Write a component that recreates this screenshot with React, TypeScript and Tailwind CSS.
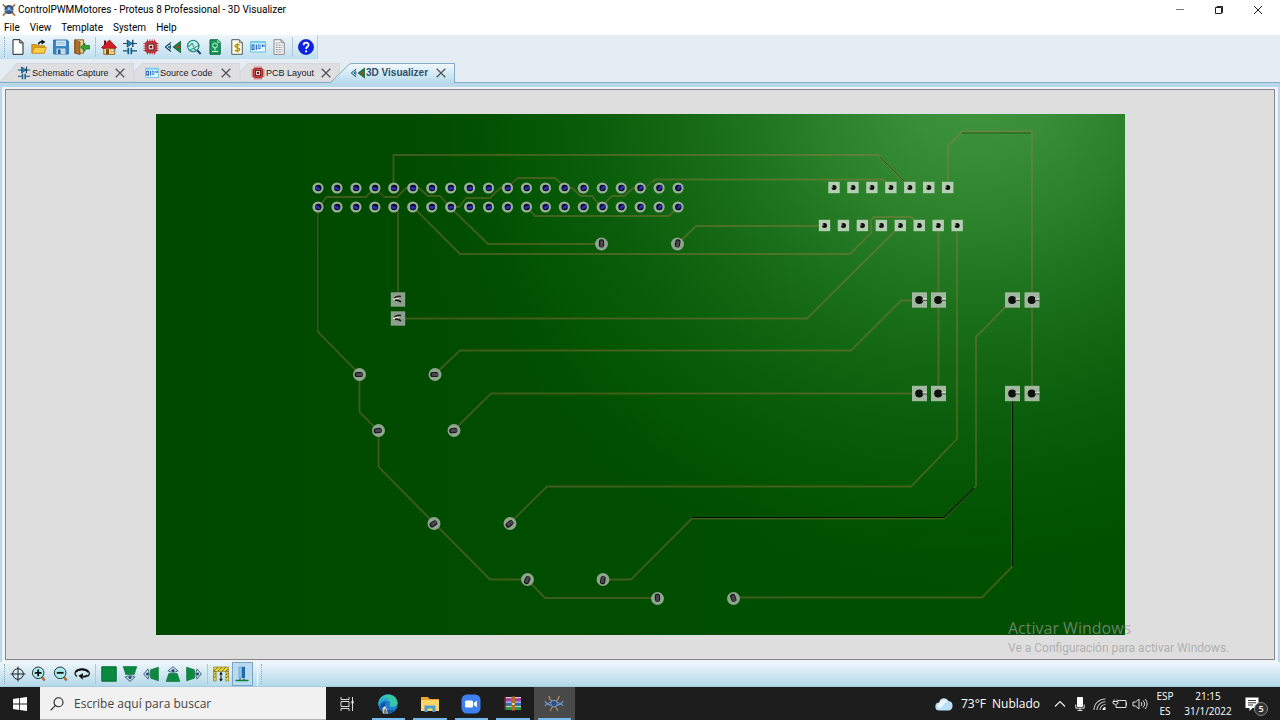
import React from "react";

type IconProps = { children: React.ReactNode; size?: string; box?: string };

function Svg({ children, size = "h-4 w-4", box = "0 0 16 16" }: IconProps) {
  return (
    <svg viewBox={box} className={`${size} shrink-0`} fill="none" aria-hidden="true">
      {children}
    </svg>
  );
}

/* ---------- application icons ---------- */

const NewIcon = () => (
  <Svg>
    <path d="M3 .7h7l3 3v11.6H3z" fill="#fff" stroke="#222" />
    <path d="M9.8.7v3.2H13" stroke="#222" />
  </Svg>
);

const OpenIcon = () => (
  <Svg>
    <path d="M.8 14V5.5h4.5l1.2 1.3h7V14z" fill="#e2a21a" stroke="#a8740c" strokeWidth=".7" />
    <path d="M1 14.2 3.6 8.4h12L13.2 14.2z" fill="#ffce45" stroke="#b98412" strokeWidth=".7" />
    <path d="M7.5 5.5c.2-2 1.5-3 3.8-2.7" stroke="#111" strokeWidth="1.5" />
    <path d="M10.5.4 14.5 3l-4 2.4z" fill="#111" />
  </Svg>
);

const SaveIcon = () => (
  <Svg>
    <path d="M.6 1h13.6l1.2 1.2V15H.6z" fill="#3b86c6" stroke="#1f5f9c" strokeWidth=".8" />
    <path d="M3 1.5h10V7H3z" fill="#d9ecf8" />
    <path d="M3.5 3.5h9M3.5 5.2h9" stroke="#7db2da" strokeWidth=".7" />
    <path d="M3.5 9.5h9V15h-9z" fill="#c4d8e6" />
    <path d="M5 10.5h2.5V15H5z" fill="#245f92" />
  </Svg>
);

const ExitIcon = () => (
  <Svg>
    <path d="M.6.8h9v13.4h-9z" fill="#e9c98c" stroke="#8a5a1e" strokeWidth=".9" />
    <path d="M1 .9 6 3v12.8L1 14z" fill="#a9712d" stroke="#6b4212" strokeWidth=".6" />
    <path d="m6.5 8.2 4.5-4v2.3h4.6v3.6H11v2.3z" fill="#35a336" stroke="#14701a" strokeWidth=".7" />
  </Svg>
);

const HomeIcon = () => (
  <Svg>
    <path d="M2.8 8h11v7.3h-11z" fill="#f7e08a" stroke="#77490e" strokeWidth=".8" />
    <path d="M3 1.5h2.2V6H3z" fill="#7d1414" />
    <path d="M.5 8.5 8.5 1l7 7.5-1 .8H1.3z" fill="#cf1f24" stroke="#7b0c10" strokeWidth=".7" />
    <path d="M5 10.2h3v5H5z" fill="#81480d" />
    <path d="M9.8 10h2.6v2.6H9.8z" fill="#fff" stroke="#9b6b20" strokeWidth=".6" />
  </Svg>
);

const SchematicIcon = () => (
  <Svg>
    <path d="M1 4.5h14M1 11.8h5M9.6 11.8H15" stroke="#174f70" strokeWidth="1.2" />
    <path d="m5.2 1 5 3.5-5 3.5z" fill="#2383b8" stroke="#123d58" strokeWidth=".8" />
    <path d="M10.8.8v7.2" stroke="#123d58" strokeWidth="1.3" />
    <path d="M6.3 8.8v6.4M9.3 8.8v6.4" stroke="#14608c" strokeWidth="1.7" />
  </Svg>
);

const ChipIcon = () => (
  <Svg>
    <path
      d="M4.5.5v15M6.9.5v15M9.2.5v15M11.5.5v15M.5 4.5h15M.5 6.9h15M.5 9.2h15M.5 11.5h15"
      stroke="#c8383c"
      strokeWidth="1"
    />
    <rect x="2.8" y="2.8" width="10.4" height="10.4" rx="1.2" fill="#d8484b" stroke="#a0181d" />
    <rect x="5" y="5" width="6" height="6" fill="#f3d6d6" stroke="#46191b" strokeWidth="1" />
    <path d="M6.8 6.8h2.4v2.4H6.8z" fill="#711" />
  </Svg>
);

const VisualizerIcon = () => (
  <Svg>
    <path d="M15.6 2.2v11.6L8 8z" fill="#14813f" stroke="#0b4a25" strokeWidth=".7" />
    <path d="m11 8 3-1.6v3.2z" fill="#d8322c" />
    <path d="M.3 8 6 3.4M.3 8 6 12.6" stroke="#1b3f55" strokeWidth="1.1" />
    <path d="M4.6 5c1.4 1.5 1.4 4.5 0 6" stroke="#1b3f55" />
    <circle cx="4" cy="8" r="1.3" fill="#2d83b0" />
  </Svg>
);

const GerberIcon = () => (
  <Svg>
    <circle cx="7.2" cy="7" r="5.7" fill="#c3ece6" stroke="#2f8f83" strokeWidth="1.2" />
    <path d="M1 7h3l2-3 2.5 5.5L11 7h2.500M4 11l3-1.5L10 11" stroke="#219080" />
    <path d="m11.2 11.2 3.5 3.8" stroke="#1d4e78" strokeWidth="2" />
  </Svg>
);

const DesignIcon = () => (
  <Svg>
    <path d="M3 .8h8L13.2 3v12.2H3z" fill="#1a9a5c" stroke="#0a6038" />
    <circle cx="8" cy="6.500" r="2.400" stroke="#baf0d2" />
    <path d="M8 9v2.500M5 12.5h6.200" stroke="#baf0d2" />
    <path d="M10.8 1v2.300h2.200" stroke="#d9f8e6" strokeWidth=".8" />
  </Svg>
);

const BomIcon = () => (
  <Svg>
    <path d="M2.8.7h7.5l3 3v11.6H2.8z" fill="#fffef0" stroke="#555" />
    <path d="M10.3.7v3h3" stroke="#555" strokeWidth=".8" />
    <path
      d="M10.6 6.3C9.8 5.4 6 5 6 7.1c0 2 4.7 1.2 4.7 3.4 0 2.1-3.9 1.9-5 .7M8.3 4.2v9"
      stroke="#b79300"
      strokeWidth="1.4"
    />
  </Svg>
);

const CodeIcon = () => (
  <Svg>
    <path d="M.5 2.500h15v10.500H.5z" fill="#e2f8ff" stroke="#58bbe0" strokeWidth=".9" />
    <path d="M.5 2.500h15v1.800H.5z" fill="#7ad0ee" />
    <rect x="2" y="6" width="2" height="4.500" stroke="#1553b5" />
    <path d="M6.300 5.500V11M12.500 5.500V8M14 5.500V8" stroke="#1553b5" strokeWidth="1" />
    <rect x="8.200" y="6" width="2" height="3.500" stroke="#2b78cd" strokeWidth=".9" />
  </Svg>
);

const NotesIcon = () => (
  <Svg>
    <path d="M3 .7h7l3.3 3v11.6H3z" fill="#f7f7f7" stroke="#888" />
    <path d="M10 .7v3h3.3" stroke="#777" strokeWidth=".8" />
    <path d="M4.800 4h4M4.800 6.200h6.600M4.800 8.400h6.600M4.800 10.600h6.600M4.800 12.800h6.600" stroke="#8c8c8c" strokeDasharray="2 .8" />
  </Svg>
);

const HelpIcon = () => (
  <Svg>
    <circle cx="8" cy="8" r="7.6" fill="#0b22e8" stroke="#0413a0" strokeWidth=".6" />
    <path d="M5.6 6.200c0-3.400 5-3.200 5-.3 0 1.900-2.500 1.900-2.500 4" stroke="#fff" strokeWidth="1.800" />
    <circle cx="8.100" cy="12.300" r="1.150" fill="#fff" />
  </Svg>
);

const AppIcon = () => (
  <Svg size="h-3.5 w-3.5">
    <path d="m1 1.5 4 4M15 1.5l-4 4M1 14.5l4-4M15 14.5l-4-4" stroke="#a2724b" strokeWidth="2" />
    <circle cx="8" cy="7.5" r="4.6" fill="#355d91" stroke="#263c5c" />
    <path d="M2 10c2.5-3 9.5-3 12 0" stroke="#8fb4d8" />
    <circle cx="8" cy="6.5" r="1.6" fill="#9fc3e6" />
  </Svg>
);

/* ---------- view toolbar icons ---------- */

const TargetIcon = () => (
  <Svg>
    <circle cx="8" cy="8" r="5.3" stroke="#222" />
    <path d="M8 .5v15M.5 8h15" stroke="#222" />
  </Svg>
);

const Zoom = ({ plus }: { plus?: boolean }) => (
  <Svg>
    <path d="m10.800 10.800 2.800 3.800" stroke="#a8672a" strokeWidth="2.400" />
    <circle cx="7.200" cy="6.800" r="5.800" fill="#a8ecf0" stroke="#333" strokeWidth="1" />
    <path d={plus ? "M3.800 6.800h6.800M7.200 3.400v6.800" : "M3.800 6.800h6.800"} stroke="#111" strokeWidth="1.800" />
  </Svg>
);

const SpinIcon = () => (
  <Svg>
    <path d="M3 10.500C-1.500 7 2.500 3 8 3s10 4 5.500 7.500" stroke="#111" strokeWidth="1.300" />
    <path d="M1.800 6c2.500-3.300 10-3.300 12.600.3" stroke="#111" strokeWidth="1.800" />
    <path d="M9 10.800c1.500 0 3.300-.4 4.600-1.500" stroke="#111" strokeWidth="2" />
    <path d="m4.500 9.800 4.500-2.600-.3 6.600z" fill="#111" />
  </Svg>
);

const TopViewIcon = () => (
  <Svg>
    <path d="M.8.8h14.4v14.4H.8z" fill="#0a8a41" stroke="#066630" />
  </Svg>
);

const SideViewIcon = ({ turn }: { turn: number }) => (
  <Svg>
    <g transform={`rotate(${turn} 8 8)`}>
      <path d="M1.200.6h13.600l-2.600 7.900H3.800z" fill="#0a8a41" stroke="#066630" strokeWidth=".6" />
      <path d="M3.500 11c2.500-1.500 6.500-1.500 9 0M2.800 10.800 8 15.300l5.200-4.500" stroke="#23486a" strokeWidth=".9" />
      <circle cx="8" cy="11.600" r="1.500" fill="#23486a" />
    </g>
  </Svg>
);

const HeightIcon = () => (
  <Svg>
    <path d="M.5 1h15v4.500H.5zM.5 5.500h2.700V15H.5zM12.800 5.500h2.700V15h-2.700z" fill="#ead83a" stroke="#77701b" strokeWidth=".6" />
    <path d="m1 5 4-4M5 5l4-4M9 5l4-4M13 5l2-2M.8 9 3 7M.8 12 3 10M13 9l2.200-2M13 12l2.200-2" stroke="#444" strokeWidth=".7" />
    <path d="M8 6.500V15" stroke="#111" />
    <path d="m8 5.800 1.800 2.700H6.200zM8 15.500l1.800-2.700H6.200z" fill="#111" />
  </Svg>
);

const ComponentsIcon = () => (
  <Svg>
    <path d="M5 1h2.800v11H5z" fill="#8ccbee" stroke="#3d84b8" strokeWidth=".5" />
    <path d="M8 .8h3V12H8z" fill="#216ca8" />
    <path d="M6 12.500V14M10 12.500V14" stroke="#333" />
    <path d="M1.500 14.500h13" stroke="#09803b" strokeWidth="1.500" />
  </Svg>
);

/* ---------- circuit board ---------- */

const TRACES = [
  "M393.500 188V155H878L909 187",
  "M318 207 327 197H366L375 188 384 197H397L406 188H419L428 196H440L450 207",
  "M451 207H459L466 198H490L500 188H507L518 178H555L566 188H572L581 196H592L601 207 612 196H624L633 188H646L655 179.500H883L891 187",
  "M527 207 535 216H669L678 207",
  "M413 207 460 254H850L871 233V220L874 217H911L919 225",
  "M450 207 488 244H601",
  "M677.500 244 696 226H824",
  "M393.500 207 398 212V300",
  "M398 318.500H807L900 226",
  "M318 207V332L359.500 374V412L378.500 431V467L434 523 490 579.500H527L545 598H657",
  "M435 374 460 350.500H851L901 300.500H919",
  "M454 430 491 393.500H919",
  "M510 523 547 486.500H911L957 439V226",
  "M603 579.500H631L692 518.500H944L976 486V337L1012 300",
  "M733 597.500H982L1012 567V393",
  "M938.500 226V393",
  "M948 187V146L962 131.500H1032V393",
];

const STRONG_SHADOWS = ["M692 517.500H944L974 488", "M1012.500 400V566"];
const SOFT_SHADOWS = [
  "M318.800 214V330",
  "M962 133H1031",
  "M880 157 907 184",
  "M378 191 384 197",
  "M510 187 517 180",
  "M647 188 653 182",
];

const ROUND_PADS = [
  { x: 601.5, y: 244, turn: 90 },
  { x: 677.5, y: 244, turn: 100 },
  { x: 359.5, y: 374.5, turn: 0 },
  { x: 435, y: 374.5, turn: 0 },
  { x: 378.5, y: 430.5, turn: -6 },
  { x: 454, y: 430.5, turn: -6 },
  { x: 434, y: 523.5, turn: -35 },
  { x: 510, y: 523.5, turn: -40 },
  { x: 527.5, y: 579.5, turn: -65 },
  { x: 603, y: 579.5, turn: -80 },
  { x: 657.5, y: 598.5, turn: 88 },
  { x: 733.5, y: 598.5, turn: 68 },
];

const PITCH = 18.95;
const series = (count: number, start: number) => Array.from({ length: count }, (_, i) => start + i * PITCH);

function Board() {
  return (
    <svg viewBox="156 114 969 521" className="h-full w-full" role="img" aria-label="PCB">
      <defs>
        <linearGradient id="base" x1="0" y1="0" x2="1" y2="0">
          <stop offset="0" stopColor="#004900" />
          <stop offset=".7" stopColor="#004f00" />
          <stop offset="1" stopColor="#005000" />
        </linearGradient>
        <radialGradient
          id="glow"
          gradientUnits="userSpaceOnUse"
          cx="0"
          cy="0"
          r="1"
          gradientTransform="translate(980 90) rotate(-12) scale(580 500)"
        >
          <stop offset="0" stopColor="#3f963d" />
          <stop offset=".12" stopColor="#388f37" />
          <stop offset=".28" stopColor="#2a812a" />
          <stop offset=".44" stopColor="#1b701b" />
          <stop offset=".64" stopColor="#0c5f0c" />
          <stop offset=".8" stopColor="#055705" stopOpacity=".85" />
          <stop offset="1" stopColor="#005000" stopOpacity="0" />
        </radialGradient>
      </defs>
      <rect x="156" y="114" width="969" height="521" fill="url(#base)" />
      <rect x="156" y="114" width="969" height="521" fill="url(#glow)" />

      <g fill="none" stroke="#b07a48" strokeOpacity=".36" strokeWidth="1.8">
        {TRACES.map((d) => (
          <path key={d} d={d} />
        ))}
      </g>
      <g fill="none" stroke="#001000" strokeOpacity=".95" strokeWidth="1.1">
        {STRONG_SHADOWS.map((d) => (
          <path key={d} d={d} />
        ))}
      </g>
      <g fill="none" stroke="#001c00" strokeOpacity=".45">
        {SOFT_SHADOWS.map((d) => (
          <path key={d} d={d} />
        ))}
      </g>

      {[188, 207].map((y) =>
        series(20, 318).map((x, i) => (
          <g key={`${x}-${y}`}>
            <circle cx={x} cy={y} r="5.6" fill="#98b098" />
            <circle cx={x + 0.3} cy={y} r="3.2" fill="#0b0b22" />
            <ellipse
              cx={x + i * 0.05}
              cy={y + 0.5}
              rx="2.9"
              ry="1.4"
              fill="#2c2cb8"
              transform={`rotate(${24 - i * 4} ${x} ${y})`}
            />
          </g>
        )),
      )}

      {[...series(7, 834).map((x) => [x, 187.5]), ...series(8, 824.5).map((x) => [x, 225.5])].map(([x, y]) => (
        <g key={`${x}-${y}`}>
          <rect x={x - 5.7} y={y - 5.7} width="11.4" height="11.4" fill="#b4ceb2" />
          <circle cx={x} cy={y} r="2.5" fill="#0a0a0a" />
          <path d={`M${x - 3} ${y - 0.5}h2`} stroke="#d9e8d7" strokeWidth="1" />
        </g>
      ))}

      {[300, 393.5].map((y) =>
        [919.5, 938.5, 1012.5, 1032].map((x) => (
          <g key={`${x}-${y}`}>
            <rect x={x - 7.5} y={y - 7.7} width="15" height="15.4" fill="#a3b8a1" />
            <circle cx={x - 0.3} cy={y} r="4" fill="#0d100d" />
            <path d={`M${x + 3} ${y - 1}h4.5`} stroke="#c3d4c2" strokeWidth="1.5" />
            <path d={`M${x + 2.5} ${y + 0.5}h5`} stroke="#4c5a4c" strokeWidth="1" />
          </g>
        )),
      )}

      {[299.5, 318.5].map((y) => (
        <g key={y}>
          <rect x="390.8" y={y - 7.2} width="14.4" height="14.4" fill="#8da08d" />
          <path d={`M394 ${y - 1}q3-3 7-2`} stroke="#1d1d1d" strokeWidth="1.4" fill="none" />
          <path d={`M393 ${y}q3-1.500 6-.6`} stroke="#ececec" strokeWidth="1.200" fill="none" />
          <path d={`M395 ${y + 1}q3-1 6 1.500`} stroke="#1a1a1a" strokeWidth="1.800" fill="none" />
        </g>
      ))}

      {ROUND_PADS.map(({ x, y, turn }) => (
        <g key={`${x}-${y}`}>
          <circle cx={x} cy={y} r="6.5" fill="#8ea58e" />
          <g transform={`rotate(${turn} ${x} ${y})`}>
            <rect x={x - 4.8} y={y - 2.6} width="8.2" height="5.2" rx="2.2" fill="#18161a" />
            <rect x={x - 3.4} y={y - 1.6} width="6.4" height="3" rx="1" fill="#4a464e" />
          </g>
        </g>
      ))}
    </svg>
  );
}

/* ---------- toolbar parts ---------- */

function ToolButton({ label, pressed, children }: { label: string; pressed?: boolean; children: React.ReactNode }) {
  return (
    <button
      type="button"
      aria-label={label}
      aria-pressed={pressed}
      className={
        pressed
          ? "flex h-full items-center justify-center border border-[#7aa3c4] bg-[#b9daf0]"
          : "flex h-full items-center justify-center"
      }
    >
      {children}
    </button>
  );
}

const Divider = () => <span className="mx-0.5 h-5 w-px shrink-0 bg-[#b4c6d3]" />;
const Grip = () => <span className="h-5 w-0 shrink-0 border-l border-dotted border-[#8aa5b8]" />;

type TabProps = { label: string; icon: React.ReactNode; width: string; first?: boolean };

function Tab({ label, icon, width, first }: TabProps) {
  return (
    <div className={`relative flex h-full items-center ${width} ${first ? "pl-4" : "pl-2.5"}`}>
      <svg viewBox="0 0 106 20" preserveAspectRatio="none" className="absolute inset-0 h-full w-full" aria-hidden="true">
        <path
          d={first ? "M0 20 13 1Q14 0 16 0H106V20z" : "M0 18V9L9 0H106V20H0z"}
          fill="#dfdfe2"
          stroke="#c6cbd0"
          strokeWidth=".7"
        />
      </svg>
      <div className="relative flex w-full items-center">
        <span className="flex w-4 justify-center">{icon}</span>
        <button type="button" role="tab" className="flex-1 whitespace-nowrap text-left text-[9px] leading-3 text-[#1a1a1a]">
          {label}
        </button>
        <CloseTab label={label} />
      </div>
    </div>
  );
}

const CloseTab = ({ label }: { label: string }) => (
  <button type="button" aria-label={`Close ${label}`} className="mr-2 flex w-3 justify-center">
    <Svg size="h-2.5 w-2.5" box="0 0 10 10">
      <path d="m.7.7 8.6 8.6M9.3.7.7 9.3" stroke="#555" strokeWidth="1.3" />
    </Svg>
  </button>
);

/* ---------- taskbar ---------- */

type TaskButtonProps = { label: string; open?: boolean; active?: boolean; children: React.ReactNode };

function TaskButton({ label, open, active, children }: TaskButtonProps) {
  return (
    <button
      type="button"
      aria-label={label}
      className={`relative flex h-full items-center justify-center ${active ? "bg-[#494949]" : ""}`}
    >
      {children}
      {open && <span className="absolute inset-x-1 bottom-0 h-0.5 bg-[#76b9ed]" />}
    </button>
  );
}

const EdgeIcon = () => (
  <Svg size="h-5 w-5" box="0 0 20 20">
    <circle cx="10" cy="10" r="9.7" fill="#1a7fd0" />
    <path d="M.5 8.5C2-1.500 18-2.500 19.600 8.500c.3 4.500-5.500 5.600-8 3.200 2.400-4-2-6.700-6.100-5C3 7.600 1.500 9.500.5 12z" fill="#36c6a8" />
    <path d="M.5 8.500C2 3 8 2 11.500 5.500 6 5 1.500 8 .6 12z" fill="#2aa5dc" />
    <path d="M8 8.500c-3 4 0 9.500 8.500 7.500C12 21 4 19.500 2.500 13.500 2 10.500 5 8 8 8.500z" fill="#1350a0" />
    <path d="M4.500 14 7 12l2 3.500.8 4H4.800z" fill="#d8dce2" />
    <path d="m5.500 16.500 2-2 1.300 2.500-.3 2.500H6z" fill="#777" />
  </Svg>
);

const FolderIcon = () => (
  <Svg size="h-5 w-5" box="0 0 20 20">
    <path d="M1 3h7l1.5 2H19v12H1z" fill="#e9a52b" />
    <path d="M1 6h18v11H1z" fill="#fbd568" />
    <path d="M4.500 18v-6.500h11V18h-3v-3.500h-5V18z" fill="#4a9fd2" />
  </Svg>
);

const MeetIcon = () => (
  <Svg size="h-5 w-5" box="0 0 20 20">
    <rect x=".5" y=".5" width="19" height="19" rx="5.500" fill="#3d80f0" />
    <rect x="4" y="6.500" width="8" height="7" rx="1.500" fill="#fff" />
    <path d="m12.700 9 3.300-2.300v6.600L12.700 11z" fill="#fff" />
  </Svg>
);

const ArchiveIcon = () => (
  <Svg size="h-5 w-5" box="0 0 20 20">
    <path d="M2 3h16v4H2z" fill="#a53b9d" />
    <path d="M2 7.300h16v4H2z" fill="#3768c4" />
    <path d="M2 11.600h16V16H2z" fill="#2b9849" />
    <path d="M2 3.700h16M2 8h16M2 12.300h16" stroke="#efe3e9" />
    <path d="M8.500 2.500H12v14H8.500z" fill="#b66c2e" />
    <path d="M8.800 8.500h3v3h-3z" fill="#eee" stroke="#9d7110" />
    <path d="M2 3v13" stroke="#6c2323" strokeWidth="1.500" />
  </Svg>
);

const ProteusIcon = () => (
  <Svg size="h-5 w-5" box="0 0 20 20">
    <path d="M1 12c2-5 16-5 18 0M1 7c2 6 16 6 18 0" stroke="#6a93c8" strokeWidth="1.200" />
    <path d="M5 2c0 4 3 5 5 7M15 2c0 4-3 5-5 7M6 17l3-5M14 17l-3-5" stroke="#a78b60" strokeWidth="1.300" />
    <circle cx="10" cy="9.500" r="3.300" fill="#2f4d86" stroke="#7899ca" />
  </Svg>
);

function Taskbar() {
  return (
    <footer className="flex h-[33px] shrink-0 items-stretch bg-[#1d1d1d] font-['Open_Sans','Noto_Sans',sans-serif] text-white">
      <button type="button" aria-label="Inicio" className="flex w-10 shrink-0 items-center justify-center">
        <Svg size="h-3.5 w-3.5" box="0 0 14 14">
          <path d="m0 2 6.200-.9v5.500H0zM7 1l7-1v6.600H7zM0 7.400h6.200v5.500L0 12zM7 7.400h7V14l-7-1z" fill="#fff" />
        </Svg>
      </button>
      <label className="flex w-[286px] shrink-0 items-center gap-2.5 border-b border-[#b5b5b5] bg-[#f1f1f1] pl-2.5 pt-px">
        <Svg size="h-3.5 w-3.5" box="0 0 14 14">
          <circle cx="8.500" cy="5.300" r="4.500" stroke="#222" strokeWidth="1.100" />
          <path d="M5.300 8.600.6 13.400" stroke="#222" strokeWidth="1.100" />
        </Svg>
        <input
          type="search"
          aria-label="Buscar"
          placeholder="Escribe aquí para buscar"
          className="w-full bg-transparent text-[12px] text-[#333] outline-none placeholder:text-[#444]"
        />
      </label>
      <div className="grid w-[249px] shrink-0 grid-cols-6">
        <TaskButton label="Vista de tareas">
          <Svg size="h-3.5 w-3.5" box="0 0 14 14">
            <path d="M1 0v2.500h8V0M1 14v-2.500h8V14M1 4.500h8v5H1zM12.500 0v14" stroke="#ddd" />
            <path d="M11.500 4h2v2.500h-2z" fill="#fff" />
          </Svg>
        </TaskButton>
        <TaskButton label="Microsoft Edge" open>
          <EdgeIcon />
        </TaskButton>
        <TaskButton label="Explorador de archivos" open>
          <FolderIcon />
        </TaskButton>
        <TaskButton label="Zoom" open>
          <MeetIcon />
        </TaskButton>
        <TaskButton label="WinRAR" open>
          <ArchiveIcon />
        </TaskButton>
        <TaskButton label="Proteus" open active>
          <ProteusIcon />
        </TaskButton>
      </div>
      <div className="ml-auto flex items-center">
        <button type="button" className="flex items-center gap-2 whitespace-nowrap pt-px text-[12px]">
          <Svg size="h-[18px] w-[18px]" box="0 0 18 18">
            <path d="M4.500 15.500a4 4 0 0 1-.3-8A5 5 0 0 1 13.600 6a4.800 4.800 0 0 1-.3 9.500z" fill="#b9def8" />
            <path d="M4.500 13.500a3 3 0 0 1 0-5.500c1-4 6.500-5 8-1-3.500 0-3.500 3-5 4.500z" fill="#edf8ff" />
          </Svg>
          <span className="flex gap-1.5">
            <span>73°F</span>
            <span>Nublado</span>
          </span>
        </button>
        <div className="ml-2.5 grid w-[100px] grid-cols-5">
          <button type="button" aria-label="Mostrar iconos ocultos" className="flex justify-center">
            <Svg>
              <path d="m3 10.500 5-5 5 5" stroke="#eee" strokeWidth="1.200" />
            </Svg>
          </button>
          <button type="button" aria-label="Micrófono" className="flex justify-center">
            <Svg>
              <rect x="5" y="1" width="6" height="10" rx="1" fill="#fff" />
              <path d="M3.800 8.500v3.700h8.400V8.500M8 12v3M5.500 14.500h5" stroke="#ddd" />
            </Svg>
          </button>
          <button type="button" aria-label="Red" className="flex justify-center">
            <Svg>
              <path d="M2 14C2 7.500 7 3 13.500 3M5 14c0-4.800 3.800-8.200 8.500-8.200M8 14c0-3.200 2.500-5.500 5.500-5.500" stroke="#bbb" strokeWidth="1.100" />
              <path d="M10.500 14c0-2 1.300-3 3-3v3z" fill="#fff" />
            </Svg>
          </button>
          <button type="button" aria-label="Batería" className="flex justify-center">
            <Svg>
              <path d="M6 4.500h8v7H4V9M14.500 6.500v3M1 5.500h5v2q-2.500 2-5 0zM2 3.500v2M5 3.500v2" stroke="#ddd" />
            </Svg>
          </button>
          <button type="button" aria-label="Volumen" className="flex justify-center">
            <Svg>
              <path d="M1 6h2.500L7 3v10l-3.500-3H1zM9 6c1 1.200 1 2.800 0 4M11 4.500c2 2 2 5 0 7M13 3c2.800 3 2.800 7 0 10" stroke="#ddd" />
            </Svg>
          </button>
        </div>
        <button type="button" className="w-[30px] text-center text-[10px] leading-[15px]">
          ESP
          <br />
          ES
        </button>
        <time className="w-[56px] text-center text-[10px] leading-[15px]">
          21:15
          <br />
          31/1/2022
        </time>
        <button type="button" aria-label="Notificaciones" className="relative ml-1 mr-3 flex w-7 justify-center pr-1">
          <Svg>
            <path d="M1.500 1.500h13V12H8.500l-3 3v-3h-4z" fill="#fff" />
            <path d="M4 4.500h8M4 6.800h8M4 9h5" stroke="#333" />
          </Svg>
          <span className="absolute -bottom-1 right-0 flex h-3.5 w-3.5 items-center justify-center rounded-full border border-[#888] bg-[#333] text-[9px] font-semibold leading-none">
            5
          </span>
        </button>
      </div>
    </footer>
  );
}

/* ---------- page ---------- */

export default function App() {
  return (
    <div className="flex h-screen flex-col overflow-hidden bg-[#e6eef6] font-['Liberation_Sans',Arial,sans-serif] text-black">
      <header className="flex h-5 shrink-0 items-center bg-white pl-0.5 font-[Roboto,'Open_Sans',sans-serif]">
        <AppIcon />
        <h1 className="ml-0.5 whitespace-nowrap text-[10px] leading-5">
          ControlPWMMotores - Proteus 8 Professional - 3D Visualizer
        </h1>
        <div className="ml-auto mr-0.5 grid w-[118px] grid-cols-3">
          <button type="button" aria-label="Minimizar" className="flex justify-center">
            <Svg size="h-2.5 w-2.5" box="0 0 10 10">
              <path d="M1 4.500h8" stroke="#777" />
            </Svg>
          </button>
          <button type="button" aria-label="Restaurar" className="flex justify-center">
            <Svg size="h-2.5 w-2.5" box="0 0 10 10">
              <path d="M1.500 2.500h6v6h-6zM3 2.500v-1h5.500v6h-1" stroke="#222" />
            </Svg>
          </button>
          <button type="button" aria-label="Cerrar" className="flex justify-center">
            <Svg size="h-2.5 w-2.5" box="0 0 10 10">
              <path d="m1 1 8 8M9 1 1 9" stroke="#222" />
            </Svg>
          </button>
        </div>
      </header>

      <nav className="flex h-[15px] shrink-0 items-center gap-2.5 bg-white pl-1 font-[Roboto,'Open_Sans',sans-serif] text-[10px] leading-[15px]">
        {["File", "View", "Template", "System", "Help"].map((item) => (
          <button key={item} type="button">
            {item}
          </button>
        ))}
      </nav>

      <div className="flex h-6 shrink-0 bg-[#e4edf4]">
        <div
          role="toolbar"
          aria-label="Standard"
          className="flex items-center border-r border-[#b5d3e5] bg-linear-to-b from-[#eef6fb] to-[#bfdff0] pl-1"
        >
          <Grip />
          <div className="ml-0.5 grid h-full w-[86px] grid-cols-4">
            <ToolButton label="New"><NewIcon /></ToolButton>
            <ToolButton label="Open"><OpenIcon /></ToolButton>
            <ToolButton label="Save"><SaveIcon /></ToolButton>
            <ToolButton label="Exit"><ExitIcon /></ToolButton>
          </div>
          <Divider />
          <div className="grid h-full w-[192px] grid-cols-9">
            <ToolButton label="Home"><HomeIcon /></ToolButton>
            <ToolButton label="Schematic"><SchematicIcon /></ToolButton>
            <ToolButton label="PCB"><ChipIcon /></ToolButton>
            <ToolButton label="3D"><VisualizerIcon /></ToolButton>
            <ToolButton label="Gerber"><GerberIcon /></ToolButton>
            <ToolButton label="Design"><DesignIcon /></ToolButton>
            <ToolButton label="Bill"><BomIcon /></ToolButton>
            <ToolButton label="Code"><CodeIcon /></ToolButton>
            <ToolButton label="Notes"><NotesIcon /></ToolButton>
          </div>
          <Divider />
          <div className="grid h-full w-[22px]">
            <ToolButton label="Help topics"><HelpIcon /></ToolButton>
          </div>
        </div>
      </div>

      <div role="tablist" className="flex h-6 shrink-0 border-b border-[#86aec8] bg-[#e4edf4] pt-1">
        <Tab width="w-[134px]" label="Schematic Capture" icon={<Svg size="h-3.5 w-3.5"><SchematicIcon /></Svg>} first />
        <Tab width="w-[106px]" label="Source Code" icon={<Svg size="h-3.5 w-3.5"><CodeIcon /></Svg>} />
        <Tab width="w-[100px]" label="PCB Layout" icon={<Svg size="h-3.5 w-3.5"><ChipIcon /></Svg>} />
        <div className="relative z-10 -mb-px -ml-2.5 flex w-[125px] items-center pl-5">
          <svg viewBox="0 0 125 21" preserveAspectRatio="none" className="absolute inset-0 h-full w-full" aria-hidden="true">
            <defs>
              <linearGradient id="tab" x1="0" y1="0" x2="0" y2="1">
                <stop offset="0" stopColor="#f3f9fd" />
                <stop offset="1" stopColor="#b7dbed" />
              </linearGradient>
            </defs>
            <path d="M0 21 19 1.500 22 .5H124.500V21" fill="url(#tab)" stroke="#7fa9c4" />
          </svg>
          <div className="relative flex w-full items-center">
            <span className="flex w-4 shrink-0 justify-center">
              <Svg size="h-3.5 w-3.5"><VisualizerIcon /></Svg>
            </span>
            <button
              type="button"
              role="tab"
              aria-selected="true"
              className="flex-1 whitespace-nowrap text-left text-[10px] font-bold leading-3 text-[#2c4f6b]"
            >
              3D Visualizer
            </button>
            <CloseTab label="3D Visualizer" />
          </div>
        </div>
      </div>

      <main className="relative min-h-0 flex-1 bg-[#b9d9ea] px-0.5 pt-1">
        <div className="h-full bg-[#f0f3f5] px-[3px] pb-0.5 pt-0.5">
          <div className="h-full border border-[#86868c] bg-[#dedede] pb-6 pl-[150px] pr-[149px] pt-6">
            <Board />
          </div>
        </div>
        <aside className="absolute bottom-1 right-4 w-[256px] text-[#9a9a9a]/70">
          <p className="font-['Open_Sans','Noto_Sans',sans-serif] text-[16px] leading-5">Activar Windows</p>
          <p className="whitespace-nowrap font-[Roboto,'Open_Sans',sans-serif] text-[12px] leading-5">
            Ve a Configuración para activar Windows.
          </p>
        </aside>
      </main>

      <div
        role="toolbar"
        aria-label="View"
        className="flex h-[25px] shrink-0 items-center border-b border-[#a5cbdc] bg-linear-to-b from-[#eef6fb] to-[#b4d9ea] pl-1"
      >
        <Grip />
        <div className="ml-0.5 grid h-full w-[86px] grid-cols-4">
          <ToolButton label="Center"><TargetIcon /></ToolButton>
          <ToolButton label="Zoom in"><Zoom plus /></ToolButton>
          <ToolButton label="Zoom out"><Zoom /></ToolButton>
          <ToolButton label="Spin"><SpinIcon /></ToolButton>
        </div>
        <Divider />
        <div className="grid h-full w-[107px] grid-cols-5">
          <ToolButton label="Top view"><TopViewIcon /></ToolButton>
          <ToolButton label="Front view"><SideViewIcon turn={0} /></ToolButton>
          <ToolButton label="Left view"><SideViewIcon turn={90} /></ToolButton>
          <ToolButton label="Back view"><SideViewIcon turn={180} /></ToolButton>
          <ToolButton label="Right view"><SideViewIcon turn={270} /></ToolButton>
        </div>
        <Divider />
        <div className="grid h-full w-[43px] grid-cols-2">
          <ToolButton label="Height bounds"><HeightIcon /></ToolButton>
          <ToolButton label="Components" pressed><ComponentsIcon /></ToolButton>
        </div>
        <span className="ml-1 h-full w-px bg-white" />
        <span className="w-[3px]" />
        <Grip />
      </div>

      <Taskbar />
    </div>
  );
}
